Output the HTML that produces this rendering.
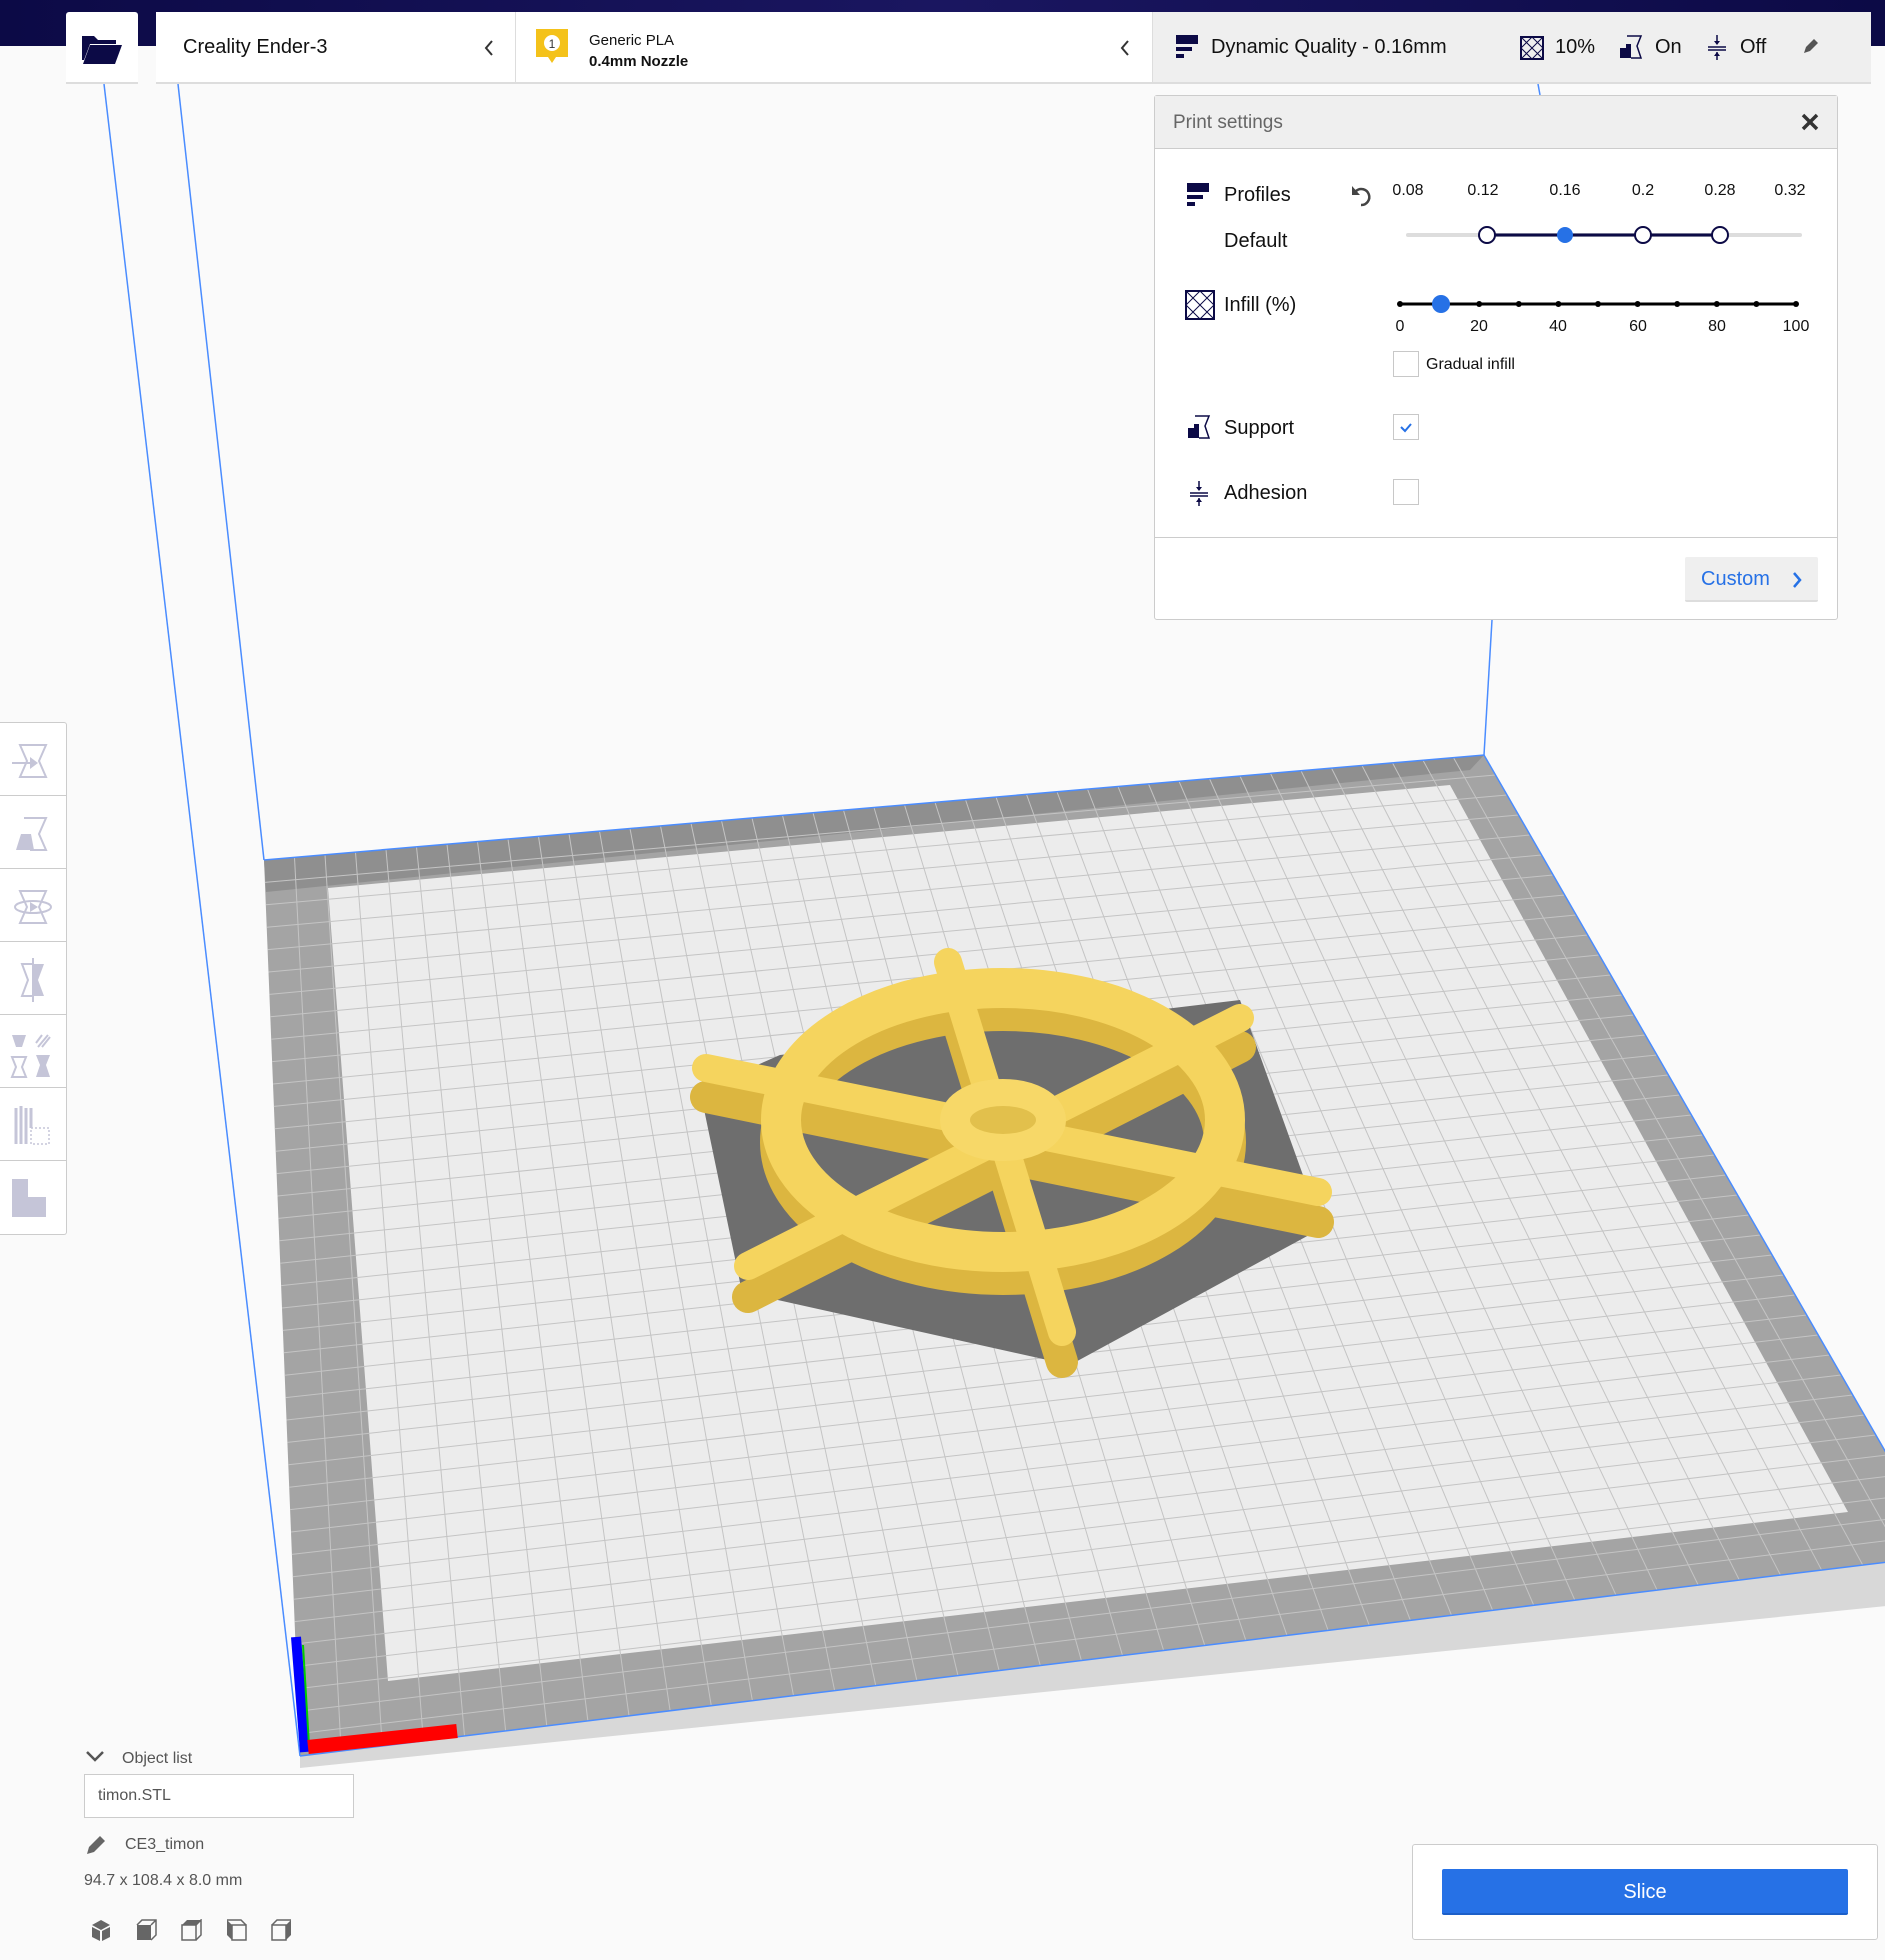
<!DOCTYPE html>
<html><head><meta charset="utf-8">
<style>
*{margin:0;padding:0;box-sizing:border-box}
body{width:1885px;height:1960px;background:#fafafa;font-family:"Liberation Sans",sans-serif;position:relative;overflow:hidden;color:#111}
.abs{position:absolute}
.topbar{left:0;top:0;width:1885px;height:46px;background:linear-gradient(90deg,#0c0a46,#1a1660 50%,#0c0a46)}
.box{background:#fff;border-bottom:2px solid #ddd}
.t{position:absolute;white-space:nowrap}
.cb{position:absolute;width:26px;height:26px;border:1px solid #c8c8c8;background:#fff}
.tool{position:absolute;left:0;width:66px;height:73px;border-bottom:1px solid #ccc}
</style></head><body>
<svg class="abs" style="left:0;top:0" width="1885" height="1960" id="scene">
  <polygon points="300,1756 1945,1555 1945,1600 300,1768" fill="#d8d8d8"/>
  <polygon points="264,860 1484,755 1945,1555 300,1756" fill="#a4a4a4"/>
  <polygon points="264,860 1484,755 1470,770 266,892" fill="#8f8f8f"/>
  <polygon points="328,888 1450,785 1848,1512 388,1681" fill="#ececec"/>
  <g id="grid" stroke="#c4c4c4" stroke-width="1"></g>
  <polyline points="264,860 1484,755 1945,1555" fill="none" stroke="#4a8cff" stroke-width="1.5"/>
  <line x1="300" y1="1756" x2="1945" y2="1555" stroke="#4a8cff" stroke-width="1.5"/>
  <line x1="104" y1="84" x2="300" y2="1756" stroke="#4a8cff" stroke-width="1.5"/>
  <line x1="178" y1="84" x2="264" y2="860" stroke="#4a8cff" stroke-width="1.5"/>
  <line x1="1492" y1="620" x2="1484" y2="755" stroke="#4a8cff" stroke-width="1.5"/>
  <line x1="1538" y1="84" x2="1540" y2="95" stroke="#4a8cff" stroke-width="1.5"/>
  <line x1="296" y1="1637" x2="305" y2="1752" stroke="#0000ff" stroke-width="10"/>
  <line x1="303" y1="1645" x2="309" y2="1745" stroke="#00cc00" stroke-width="2"/>
  <line x1="308" y1="1747" x2="457" y2="1731" stroke="#ff0000" stroke-width="14"/>
  <polygon id="shadow" points="700,1090 742,1292 1070,1365 1322,1228 1240,1000 780,1055" fill="#6e6e6e"/>
  <g id="w1" transform="translate(0,22)" stroke="#dcb640" fill="none" stroke-linecap="round">
    <ellipse cx="1003" cy="1120" rx="222" ry="132" stroke-width="42"/>
    <line x1="948" y1="968" x2="1062" y2="1340" stroke-width="32"/>
    <line x1="706" y1="1075" x2="1318" y2="1200" stroke-width="32"/>
    <line x1="1240" y1="1025" x2="748" y2="1275" stroke-width="32"/>
    <ellipse cx="1003" cy="1120" rx="48" ry="26" stroke-width="30"/>
  </g>
  <g id="w2" stroke="#f5d45e" fill="none" stroke-linecap="round">
    <ellipse cx="1003" cy="1120" rx="222" ry="132" stroke-width="40"/>
    <line x1="948" y1="962" x2="1062" y2="1332" stroke-width="28"/>
    <line x1="706" y1="1068" x2="1318" y2="1192" stroke-width="28"/>
    <line x1="1240" y1="1018" x2="748" y2="1266" stroke-width="28"/>
    <ellipse cx="1003" cy="1120" rx="48" ry="26" stroke-width="30" stroke="#f7d868"/>
  </g>
  <ellipse id="hole" cx="1003" cy="1120" rx="33" ry="14" fill="#e2c04c"/>
</svg>
<script>
(function(){
 var g=document.getElementById('grid');var P=[[264,860],[1484,755],[1945,1555],[300,1756]];
 function L(a,b,t){return [a[0]+(b[0]-a[0])*t,a[1]+(b[1]-a[1])*t];}
 var n=40,s='';
 for(var i=1;i<n;i++){var t=i/n;var a=L(P[0],P[1],t),b=L(P[3],P[2],t);s+='<line x1="'+a[0]+'" y1="'+a[1]+'" x2="'+b[0]+'" y2="'+b[1]+'"/>';
 var c=L(P[0],P[3],t),d=L(P[1],P[2],t);s+='<line x1="'+c[0]+'" y1="'+c[1]+'" x2="'+d[0]+'" y2="'+d[1]+'"/>';}
 g.innerHTML=s;
 var svg=g.parentNode;['shadow','w1','w2','hole'].forEach(function(id){svg.appendChild(document.getElementById(id))});
})();
</script>

<div class="abs topbar"></div>
<div class="abs box" style="left:66px;top:12px;width:72px;height:72px;border-radius:3px 3px 0 0">
  <svg width="72" height="72"><path d="M16 24h12l4 4h18v4H24l-6 16h-2z" fill="#0c0a46"/><path d="M24 33h32l-7 19H17z" fill="#0c0a46"/></svg>
</div>
<div class="abs box" style="left:156px;top:12px;width:360px;height:72px;border-right:1px solid #ddd">
  <span class="t" style="left:27px;top:24px;font-size:20px">Creality Ender-3</span>
  <svg class="abs" style="left:326px;top:26px" width="14" height="20"><path d="M10 3L4 10l6 7" stroke="#333" stroke-width="2" fill="none"/></svg>
</div>
<div class="abs box" style="left:516px;top:12px;width:636px;height:72px">
  <svg class="abs" style="left:18px;top:15px" width="36" height="44"><path d="M2 2h32v28H22l-4 6-4-6H2z" fill="#f4c21a"/><circle cx="18" cy="16" r="8" fill="#fff"/><text x="18" y="21" font-size="12" text-anchor="middle" font-family="Liberation Sans" fill="#333">1</text></svg>
  <span class="t" style="left:73px;top:20px;font-size:15px">Generic PLA</span>
  <span class="t" style="left:73px;top:41px;font-size:15px;font-weight:bold">0.4mm Nozzle</span>
  <svg class="abs" style="left:602px;top:26px" width="14" height="20"><path d="M10 3L4 10l6 7" stroke="#333" stroke-width="2" fill="none"/></svg>
</div>
<div class="abs" style="left:1152px;top:12px;width:719px;height:72px;background:#efefef;border-left:1px solid #ddd;border-bottom:2px solid #ddd">
  <svg class="abs" style="left:23px;top:23px" width="24" height="26"><rect x="0" y="0" width="22" height="9" fill="#0c0a46"/><rect x="0" y="12" width="16" height="4" fill="#0c0a46"/><rect x="0" y="19" width="8" height="4" fill="#0c0a46"/></svg>
  <span class="t" style="left:58px;top:24px;font-size:20px">Dynamic Quality - 0.16mm</span>
  <svg class="abs" style="left:367px;top:24px" width="24" height="24"><rect x="1" y="1" width="22" height="22" fill="none" stroke="#0c0a46" stroke-width="2"/><path d="M1 1L23 23M23 1L1 23M12 1L1 12 12 23 23 12z" stroke="#0c0a46" stroke-width="1" fill="none"/></svg>
  <span class="t" style="left:402px;top:24px;font-size:20px">10%</span>
  <svg class="abs" style="left:466px;top:22px" width="24" height="26"><path d="M8 2h14l-4 10 4 12H12" fill="none" stroke="#0c0a46" stroke-width="1.5"/><path d="M1 24V14h6v-4h5v14z" fill="#0c0a46"/></svg>
  <span class="t" style="left:502px;top:24px;font-size:20px">On</span>
  <svg class="abs" style="left:553px;top:22px" width="22" height="26"><path d="M2 13h18M2 16h18M11 1v9M11 18v8" stroke="#0c0a46" stroke-width="1.5"/><path d="M8 7l3 4 3-4M8 22l3-4 3 4" fill="#0c0a46"/></svg>
  <span class="t" style="left:587px;top:24px;font-size:20px">Off</span>
  <svg class="abs" style="left:648px;top:26px" width="18" height="18"><path d="M3 15l2-6 8-8 4 4-8 8z" fill="#555"/></svg>
</div>

<div class="abs" style="left:1154px;top:95px;width:684px;height:525px;background:#fff;border:1px solid #ccc;border-radius:3px">
  <div class="abs" style="left:0;top:0;width:682px;height:53px;background:#efefef;border-bottom:1px solid #ccc"></div>
  <span class="t" style="left:18px;top:16px;font-size:19px;color:#666">Print settings</span>
  <svg class="abs" style="left:646px;top:17px" width="18" height="18"><path d="M2 2l14 14M16 2L2 16" stroke="#333" stroke-width="3.5"/></svg>
  <div class="abs" style="left:0;top:441px;width:682px;height:1px;background:#ccc"></div>
  <div class="abs" style="left:530px;top:461px;width:133px;height:45px;background:#efefef;border-bottom:2px solid #ddd;border-radius:2px">
    <span class="t" style="left:16px;top:11px;font-size:20px;color:#2671e6">Custom</span>
    <svg class="abs" style="left:106px;top:14px" width="12" height="18"><path d="M3 2l6 7-6 7" stroke="#2671e6" stroke-width="2.5" fill="none"/></svg>
  </div>
</div>
<svg class="abs" style="left:1187px;top:183px" width="24" height="24"><rect x="0" y="0" width="22" height="9" fill="#0c0a46"/><rect x="0" y="12" width="16" height="4" fill="#0c0a46"/><rect x="0" y="19" width="8" height="4" fill="#0c0a46"/></svg>
<span class="t" style="left:1224px;top:184px;font-size:20px">Profiles</span>
<span class="t" style="left:1224px;top:230px;font-size:20px">Default</span>
<svg class="abs" style="left:1350px;top:182px" width="26" height="26"><path d="M6 9a8 8 0 1 1 5 14" stroke="#444" stroke-width="2.5" fill="none"/><path d="M2 4v9h8z" fill="#444"/></svg>
<div class="t" style="left:1390px;top:182px;font-size:16px;width:36px;text-align:center">0.08</div>
<div class="t" style="left:1465px;top:182px;font-size:16px;width:36px;text-align:center">0.12</div>
<div class="t" style="left:1547px;top:182px;font-size:16px;width:36px;text-align:center">0.16</div>
<div class="t" style="left:1625px;top:182px;font-size:16px;width:36px;text-align:center">0.2</div>
<div class="t" style="left:1702px;top:182px;font-size:16px;width:36px;text-align:center">0.28</div>
<div class="t" style="left:1772px;top:182px;font-size:16px;width:36px;text-align:center">0.32</div>
<svg class="abs" style="left:1395px;top:220px" width="420" height="130">
  <line x1="13" y1="15" x2="405" y2="15" stroke="#ddd" stroke-width="4" stroke-linecap="round"/>
  <line x1="92" y1="15" x2="325" y2="15" stroke="#0c0a46" stroke-width="3"/>
  <circle cx="92" cy="15" r="8" fill="#fff" stroke="#0c0a46" stroke-width="2"/>
  <circle cx="170" cy="15" r="8" fill="#2671e6"/>
  <circle cx="248" cy="15" r="8" fill="#fff" stroke="#0c0a46" stroke-width="2"/>
  <circle cx="325" cy="15" r="8" fill="#fff" stroke="#0c0a46" stroke-width="2"/>
  <line x1="5" y1="84" x2="401" y2="84" stroke="#000" stroke-width="3"/>
  <g fill="#000"><circle cx="5" cy="84" r="3"/><circle cx="44.6" cy="84" r="3"/><circle cx="84.2" cy="84" r="3"/><circle cx="123.8" cy="84" r="3"/><circle cx="163.4" cy="84" r="3"/><circle cx="203" cy="84" r="3"/><circle cx="242.6" cy="84" r="3"/><circle cx="282.2" cy="84" r="3"/><circle cx="321.8" cy="84" r="3"/><circle cx="361.4" cy="84" r="3"/><circle cx="401" cy="84" r="3"/></g>
  <circle cx="46" cy="84" r="9" fill="#2671e6"/>
</svg>
<svg class="abs" style="left:1185px;top:290px" width="30" height="30"><rect x="1" y="1" width="28" height="28" fill="none" stroke="#0c0a46" stroke-width="2"/><path d="M1 1L29 29M29 1L1 29M15 1L1 15 15 29 29 15z" stroke="#0c0a46" stroke-width="1" fill="none"/></svg>
<span class="t" style="left:1224px;top:294px;font-size:20px">Infill (%)</span>
<div class="t" style="left:1385px;top:318px;font-size:16px;width:30px;text-align:center">0</div>
<div class="t" style="left:1464px;top:318px;font-size:16px;width:30px;text-align:center">20</div>
<div class="t" style="left:1543px;top:318px;font-size:16px;width:30px;text-align:center">40</div>
<div class="t" style="left:1623px;top:318px;font-size:16px;width:30px;text-align:center">60</div>
<div class="t" style="left:1702px;top:318px;font-size:16px;width:30px;text-align:center">80</div>
<div class="t" style="left:1778px;top:318px;font-size:16px;width:36px;text-align:center">100</div>
<div class="cb" style="left:1393px;top:351px"></div>
<span class="t" style="left:1426px;top:356px;font-size:16px">Gradual infill</span>
<svg class="abs" style="left:1187px;top:414px" width="26" height="26"><path d="M8 2h14l-4 10 4 12H12" fill="none" stroke="#0c0a46" stroke-width="1.5"/><path d="M1 24V14h6v-4h5v14z" fill="#0c0a46"/></svg>
<span class="t" style="left:1224px;top:417px;font-size:20px">Support</span>
<div class="cb" style="left:1393px;top:414px"><svg width="24" height="24"><path d="M7 12l4 4 6-7" stroke="#2671e6" stroke-width="2" fill="none"/></svg></div>
<svg class="abs" style="left:1188px;top:480px" width="24" height="26"><path d="M2 13h18M2 16h18M11 1v9M11 18v8" stroke="#0c0a46" stroke-width="1.5"/><path d="M8 7l3 4 3-4M8 22l3-4 3 4" fill="#0c0a46"/></svg>
<span class="t" style="left:1224px;top:482px;font-size:20px">Adhesion</span>
<div class="cb" style="left:1393px;top:479px"></div>

<div class="abs" style="left:0;top:722px;width:67px;height:513px;background:#fff;border:1px solid #ccc;border-left:none;border-radius:0 3px 3px 0;overflow:hidden">
  <div class="tool" style="top:0"><svg width="66" height="73"><path d="M20 22h26l-7 16 7 16H20l7-16z" fill="none" stroke="#c5c5d8" stroke-width="2"/><path d="M12 40h22" stroke="#c5c5d8" stroke-width="2"/><path d="M30 34l8 6-8 6z" fill="#c5c5d8"/></svg></div>
  <div class="tool" style="top:73px"><svg width="66" height="73"><path d="M24 22h22l-7 16 7 16H30" fill="none" stroke="#c5c5d8" stroke-width="2"/><path d="M16 54l5-16h10l3 16z" fill="#c5c5d8"/></svg></div>
  <div class="tool" style="top:146px"><svg width="66" height="73"><path d="M20 22h26l-7 16 7 16H20l7-16z" fill="none" stroke="#c5c5d8" stroke-width="2"/><ellipse cx="33" cy="38" rx="18" ry="6" fill="none" stroke="#c5c5d8" stroke-width="2"/><path d="M30 33l8 5-8 5z" fill="#c5c5d8"/></svg></div>
  <div class="tool" style="top:219px"><svg width="66" height="73"><path d="M33 22h-11l6 16-6 16h11" fill="none" stroke="#c5c5d8" stroke-width="2"/><path d="M33 22h11l-6 16 6 16H33z" fill="#c5c5d8"/><path d="M33 16v44" stroke="#c5c5d8" stroke-width="2"/></svg></div>
  <div class="tool" style="top:292px"><svg width="66" height="73"><path d="M12 20h14l-4 12h-6z M36 40h14l-4 10 4 12H36l4-12z" fill="#c5c5d8"/><path d="M12 42h14l-4 10 4 10H12l4-10z" fill="none" stroke="#c5c5d8" stroke-width="2"/><path d="M38 32l10-12M42 32l8-10M36 28l6-8" stroke="#c5c5d8" stroke-width="2"/></svg></div>
  <div class="tool" style="top:365px"><svg width="66" height="73"><path d="M16 20v36M21 18v38M26 20v36M31 20v20" stroke="#c5c5d8" stroke-width="3"/><rect x="31" y="40" width="18" height="16" fill="none" stroke="#c5c5d8" stroke-width="1.5" stroke-dasharray="2 2"/></svg></div>
  <div class="tool" style="top:438px;border:none"><svg width="66" height="73"><path d="M12 18h16v18h18v20H12z" fill="#c5c5d8"/></svg></div>
</div>

<svg class="abs" style="left:85px;top:1750px" width="20" height="14"><path d="M2 2l8 8 8-8" stroke="#555" stroke-width="2.5" fill="none"/></svg>
<span class="t" style="left:122px;top:1750px;font-size:16px;color:#555">Object list</span>
<div class="abs" style="left:84px;top:1774px;width:270px;height:44px;background:#fff;border:1px solid #ccc"></div>
<span class="t" style="left:98px;top:1787px;font-size:16px;color:#555">timon.STL</span>
<svg class="abs" style="left:84px;top:1833px" width="24" height="24"><path d="M3 21l2-7 11-11 5 5-11 11z" fill="#666"/></svg>
<span class="t" style="left:125px;top:1836px;font-size:16px;color:#555">CE3_timon</span>
<span class="t" style="left:84px;top:1872px;font-size:16px;color:#555">94.7 x 108.4 x 8.0 mm</span>
<svg class="abs" style="left:90px;top:1919px" width="210" height="24">
  <g fill="#666"><path d="M2 6l9-5 9 5-9 5zM2 8l8 4v10l-8-4zM20 8l-8 4v10l8-4z"/></g>
  <g transform="translate(46,0)"><rect x="1" y="6" width="14" height="15" fill="#666"/><path d="M1 6l5-5h14v15l-5 5M15 6l5-5" fill="none" stroke="#666" stroke-width="1.5"/></g>
  <g transform="translate(91,0)"><path d="M1 6l5-5h14l-5 5z" fill="#666"/><rect x="1" y="6" width="14" height="15" fill="none" stroke="#666" stroke-width="1.5"/><path d="M15 6l5-5v15l-5 5" fill="none" stroke="#666" stroke-width="1.5"/></g>
  <g transform="translate(136,0)"><path d="M1 1v15l5 5V6z" fill="#666"/><rect x="6" y="6" width="14" height="15" fill="none" stroke="#666" stroke-width="1.5"/><path d="M1 1h14l5 5" fill="none" stroke="#666" stroke-width="1.5"/></g>
  <g transform="translate(181,0)"><path d="M15 6l5-5v15l-5 5z" fill="#666"/><rect x="1" y="6" width="14" height="15" fill="none" stroke="#666" stroke-width="1.5"/><path d="M1 6l5-5h14" fill="none" stroke="#666" stroke-width="1.5"/></g>
</svg>

<div class="abs" style="left:1412px;top:1844px;width:466px;height:96px;background:#fff;border:1px solid #ccc;border-radius:3px"></div>
<div class="abs" style="left:1442px;top:1869px;width:406px;height:46px;background:#2671e6;border-bottom:2px solid #1c5fc8;border-radius:2px;color:#fff;font-size:20px;text-align:center;line-height:46px">Slice</div>
</body></html>
